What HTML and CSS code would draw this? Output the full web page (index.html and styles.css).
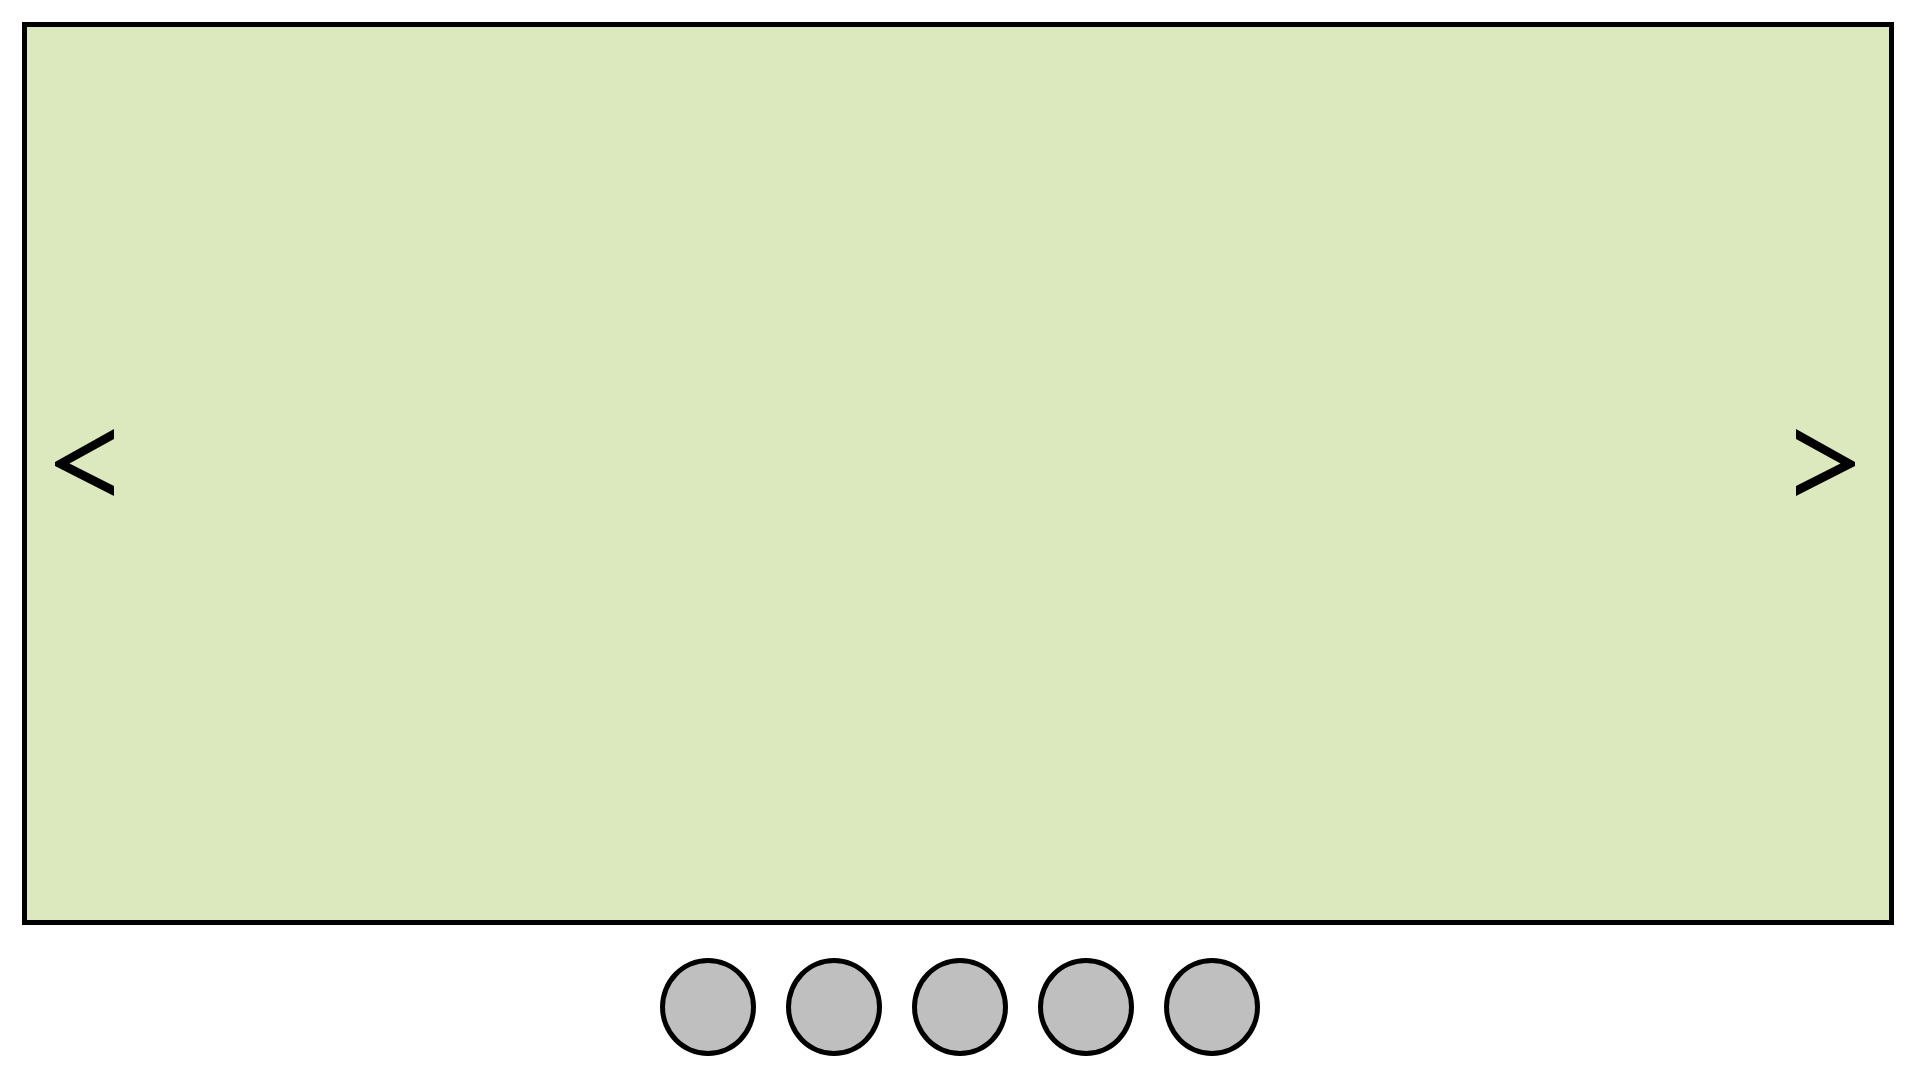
FILE: index.html
```html
<!DOCTYPE html>
<html lang="en">
<head>
  <meta charset="utf-8">
  <meta name="viewport" content="width=device-width, initial-scale=1">
  <title>Carousel</title>
  <link rel="stylesheet" href="styles.css">
</head>
<body>
  <main class="carousel">
    <section class="slide" aria-label="Slide">
      <button class="arrow" type="button" aria-label="Previous slide">
        <svg class="arrow-icon" viewBox="0 0 59 67" aria-hidden="true"><path d="M59 0L0 33V37L59 67V57L14.500 34.500L59 10Z"/></svg>
      </button>
      <button class="arrow" type="button" aria-label="Next slide">
        <svg class="arrow-icon" viewBox="0 0 59 67" aria-hidden="true"><path d="M0 0L59 33V37L0 67V57L44.500 34.500L0 10Z"/></svg>
      </button>
    </section>
    <nav class="dots" aria-label="Choose a slide">
      <button class="dot" type="button" aria-label="Slide 1"></button>
      <button class="dot" type="button" aria-label="Slide 2"></button>
      <button class="dot" type="button" aria-label="Slide 3"></button>
      <button class="dot" type="button" aria-label="Slide 4"></button>
      <button class="dot" type="button" aria-label="Slide 5"></button>
    </nav>
  </main>
</body>
</html>
```

FILE: styles.css
```css
* {
  box-sizing: border-box;
}

body {
  margin: 0;
  background: #fff;
  font-family: "Liberation Sans", sans-serif;
}

.carousel {
  display: flex;
  flex-direction: column;
  gap: 33px;
  min-height: 100vh;
  padding: 22px 0 24px;
}

.slide {
  display: flex;
  flex: 1;
  align-items: center;
  justify-content: space-between;
  margin: 0 26px 0 22px;
  padding: 0 34px 22px 28px;
  border: 5px solid #000;
  background: #dce9be;
}

.arrow {
  padding: 0;
  border: 0;
  background: none;
  cursor: pointer;
}

.arrow-icon {
  display: block;
  width: 59px;
  height: 67px;
  fill: #000;
}

.dots {
  display: flex;
  justify-content: center;
  gap: 30px;
}

.dot {
  width: 96px;
  height: 98px;
  padding: 0;
  border: 5px solid #000;
  border-radius: 50%;
  background: #bfbfbf;
  cursor: pointer;
}
```
